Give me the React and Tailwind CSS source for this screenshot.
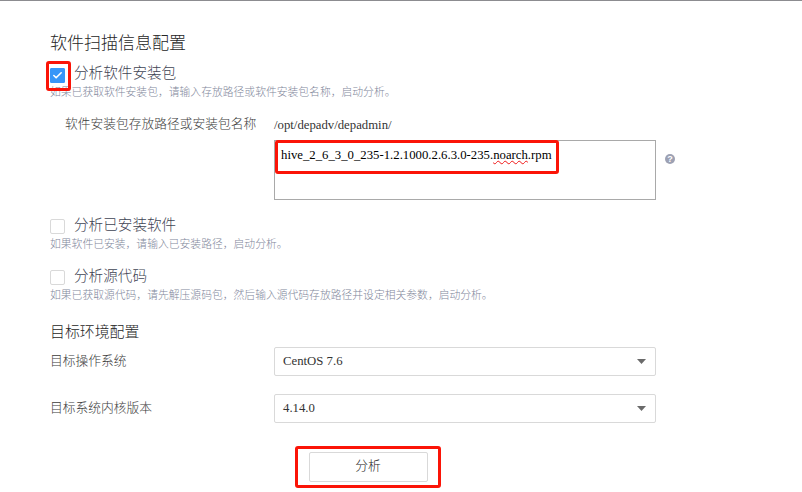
import React, { useState } from 'react';
import { Check } from 'lucide-react';

const ScanOption = ({ label, hint, checked, onToggle, highlighted = false }) => (
  <div>
    <label className="flex h-[22px] items-start">
      <span className={`relative mr-[9px] block h-[15px] w-[15px] ${highlighted ? 'mt-[6px]' : 'mt-[5px]'}`}>
        <input type="checkbox" checked={checked} onChange={onToggle} className="sr-only" />
        <span
          className={`flex h-[15px] w-[15px] items-center justify-center border ${
            checked ? 'rounded-[1px] border-[#3796f8] bg-[#3796f8]' : 'rounded-[2px] border-[#d9d9d9] bg-white'
          }`}
        >
          {checked && <Check className="h-[11px] w-[11px] shrink-0 text-white" strokeWidth={3.5} />}
        </span>
        {highlighted && (
          <span className="absolute -top-[7px] -left-[4px] z-10 h-[30px] w-[25px] rounded-[3px] border-[3px] border-[#fb1407]" />
        )}
      </span>
      <span className="text-[14.6px] leading-[22px] text-[#3f4554]">{label}</span>
    </label>
    <p className="h-4 text-[10.8px] leading-4 whitespace-nowrap text-[#7f879b]">{hint}</p>
  </div>
);

const SelectField = ({ label, value }) => (
  <div className="flex h-[29px] items-center">
    <span className="w-[224px] text-[12.75px] text-[#3c3c3c]">{label}</span>
    <button
      type="button"
      className="flex h-[29px] w-[382px] items-center justify-between rounded-[2px] border border-[#d9d9d9] pr-[9px] pl-[8px] text-[12.75px] text-[#333]"
    >
      <span>{value}</span>
      <svg className="h-[5px] w-[9px]" viewBox="0 0 9 5" fill="#6a6a6a">
        <path d="M0 0h9L4.5 5z" />
      </svg>
    </button>
  </div>
);

const App = () => {
  const [modes, setModes] = useState({ rpm: true, installed: false, source: false });
  const toggle = (key) => setModes((prev) => ({ ...prev, [key]: !prev[key] }));

  return (
    <div className="h-[492px] w-[802px] overflow-hidden border-t border-[#8c8c90] bg-white pt-[30px] pl-[50px] font-['Liberation_Serif','Noto_Sans_CJK_SC',sans-serif] font-light">
      <h1 className="mb-[5px] h-[26px] text-[17px] leading-[26px] text-[#262626]">软件扫描信息配置</h1>

      <ScanOption
        label="分析软件安装包"
        hint="如果已获取软件安装包，请输入存放路径或软件安装包名称，启动分析。"
        checked={modes.rpm}
        onToggle={() => toggle('rpm')}
        highlighted
      />

      <div className="mt-[14px] mb-[14px] flex">
        <span className="w-[224px] pl-[15px] text-[12.75px] leading-5 text-[#3c3c3c]">
          软件安装包存放路径或安装包名称
        </span>
        <div>
          <p className="mb-[6px] h-5 text-[12.75px] leading-[22px] text-[#333]">/opt/depadv/depadmin/</p>
          <div className="flex">
            <div className="relative h-[60px] w-[382px] border border-[#a9a9a9] pt-[4px] pl-[6px] text-[12.75px] leading-5 whitespace-nowrap text-black">
              hive_2_6_3_0_235-1.2.1000.2.6.3.0-235.
              <span className="underline decoration-[#f01818] decoration-wavy decoration-[0.8px] underline-offset-[1px] [text-decoration-skip-ink:none]">
                noarch
              </span>
              .rpm
              <span className="absolute -top-px left-0 h-[34px] w-[284px] rounded-[3px] border-[3px] border-[#fb1407]" />
            </div>
            <span className="mt-[14px] ml-[9px] flex h-[10px] w-[10px] items-center justify-center rounded-full bg-[#9da1b3] font-['Liberation_Sans',sans-serif] text-[9px] leading-none font-bold text-white">
              ?
            </span>
          </div>
        </div>
      </div>

      <div className="space-y-[13px]">
        <ScanOption
          label="分析已安装软件"
          hint="如果软件已安装，请输入已安装路径，启动分析。"
          checked={modes.installed}
          onToggle={() => toggle('installed')}
        />
        <ScanOption
          label="分析源代码"
          hint="如果已获取源代码，请先解压源码包，然后输入源代码存放路径并设定相关参数，启动分析。"
          checked={modes.source}
          onToggle={() => toggle('source')}
        />
      </div>

      <h2 className="mt-[18px] mb-[4px] h-[22px] text-[14.9px] leading-[22px] text-[#262626]">目标环境配置</h2>
      <div className="space-y-[18px]">
        <SelectField label="目标操作系统" value="CentOS 7.6" />
        <SelectField label="目标系统内核版本" value="4.14.0" />
      </div>

      <div className="mt-[23px] ml-[245px] flex h-[42px] w-[146px] justify-center rounded-[3px] border-[3px] border-[#fb1407] pt-[3px]">
        <button
          type="button"
          className="h-[30px] w-[119px] rounded-[2px] border border-[#d9d9d9] text-[12.75px] text-[#222]"
        >
          分析
        </button>
      </div>
    </div>
  );
};

export default App;
